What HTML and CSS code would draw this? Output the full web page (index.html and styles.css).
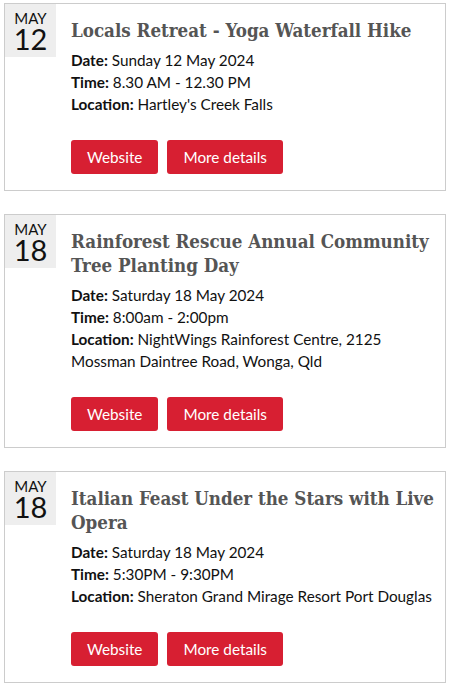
FILE: index.html
```html
<!DOCTYPE html>
<html>
<head>
<meta charset="utf-8">
<link rel="stylesheet" href="styles.css">
</head>
<body>
<div class="list">
  <div class="event">
    <div class="date"><span class="month">MAY</span><span class="day">12</span></div>
    <div class="info">
      <h2 class="title">Locals Retreat - Yoga Waterfall Hike</h2>
      <p class="line"><b>Date:</b> Sunday 12 May 2024</p>
      <p class="line"><b>Time:</b> 8.30 AM - 12.30 PM</p>
      <p class="line"><b>Location:</b> Hartley's Creek Falls</p>
      <div class="actions"><a class="btn">Website</a><a class="btn">More details</a></div>
    </div>
  </div>
  <div class="event">
    <div class="date"><span class="month">MAY</span><span class="day">18</span></div>
    <div class="info">
      <h2 class="title">Rainforest Rescue Annual Community Tree Planting Day</h2>
      <p class="line"><b>Date:</b> Saturday 18 May 2024</p>
      <p class="line"><b>Time:</b> 8:00am - 2:00pm</p>
      <p class="line"><b>Location:</b> NightWings Rainforest Centre, 2125 Mossman Daintree Road, Wonga, Qld</p>
      <div class="actions"><a class="btn">Website</a><a class="btn">More details</a></div>
    </div>
  </div>
  <div class="event">
    <div class="date"><span class="month">MAY</span><span class="day">18</span></div>
    <div class="info">
      <h2 class="title">Italian Feast Under the Stars with Live Opera</h2>
      <p class="line"><b>Date:</b> Saturday 18 May 2024</p>
      <p class="line"><b>Time:</b> 5:30PM - 9:30PM</p>
      <p class="line"><b>Location:</b> Sheraton Grand Mirage Resort Port Douglas</p>
      <div class="actions"><a class="btn">Website</a><a class="btn">More details</a></div>
    </div>
  </div>
</div>
</body>
</html>
```
FILE: styles.css
```css
html, body { margin: 0; padding: 0; background: #fff; }
body { font-family: Lato, "Open Sans", sans-serif; color: #111; }
.list { display: flex; flex-direction: column; gap: 23px; padding: 3px 4px 0 4px; width: 442px; }
.event { display: flex; border: 1px solid #ccc; }
.date { flex: none; width: 51px; height: 53px; background: #eee; display: flex; flex-direction: column; align-items: center; color: #111; }
.month { font-size: 15px; line-height: 16px; margin-top: 6px; }
.day { font-size: 29px; line-height: 30px; margin-top: -2px; }
.info { flex: 1; padding: 15px 3px 16px 15px; }
.title { margin: 0 0 6px 0; font-family: "DejaVu Serif Condensed", "DejaVu Serif", serif; font-stretch: condensed; font-weight: bold; font-size: 18.6px; line-height: 24px; color: #555; }
.line { margin: 0; font-size: 15.3px; line-height: 22px; }
.line b { font-weight: bold; }
.actions { display: flex; gap: 9px; margin-top: 25px; }
.btn { display: block; background: #d71f32; color: #fff; font-size: 15.3px; line-height: 34px; height: 34px; padding: 0 16px; border-radius: 3px; }
```
